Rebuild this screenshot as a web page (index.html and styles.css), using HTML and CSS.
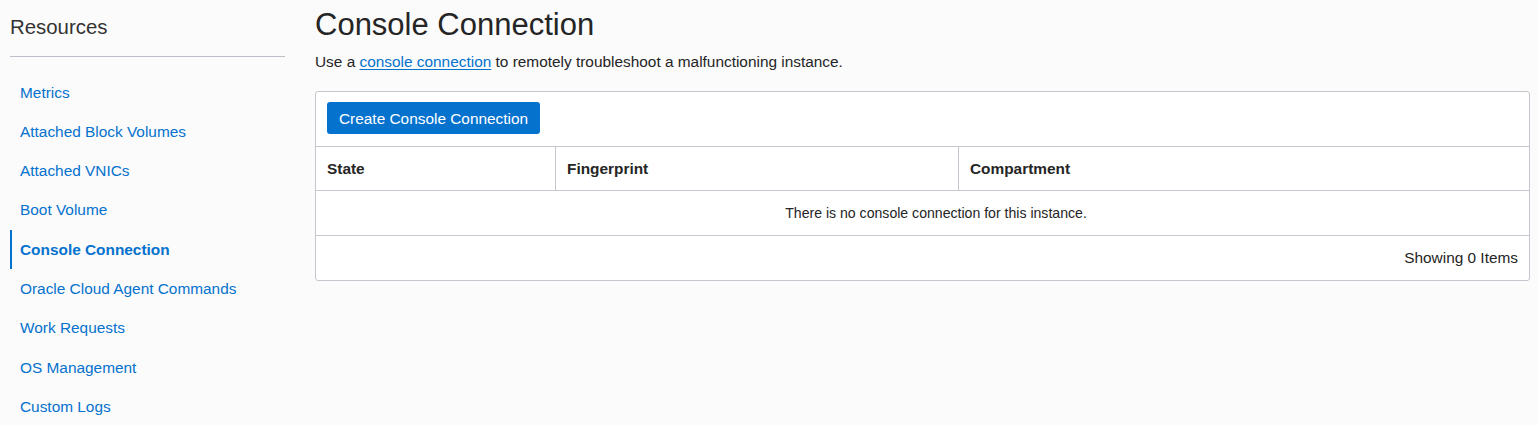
FILE: index.html
```html
<!DOCTYPE html>
<html>
<head>
<meta charset="utf-8">
<link rel="stylesheet" href="styles.css">
</head>
<body>
<div class="page">
  <aside class="sidebar">
    <h2 class="side-title">Resources</h2>
    <nav class="side-nav">
      <a class="nav-item">Metrics</a>
      <a class="nav-item">Attached Block Volumes</a>
      <a class="nav-item">Attached VNICs</a>
      <a class="nav-item">Boot Volume</a>
      <a class="nav-item active">Console Connection</a>
      <a class="nav-item">Oracle Cloud Agent Commands</a>
      <a class="nav-item">Work Requests</a>
      <a class="nav-item">OS Management</a>
      <a class="nav-item">Custom Logs</a>
    </nav>
  </aside>
  <main class="main">
    <h1 class="title">Console Connection</h1>
    <p class="desc">Use a <a class="link">console connection</a> to remotely troubleshoot a malfunctioning instance.</p>
    <div class="panel">
      <div class="toolbar">
        <button class="btn">Create Console Connection</button>
      </div>
      <div class="thead">
        <div class="th col1">State</div>
        <div class="th col2">Fingerprint</div>
        <div class="th col3">Compartment</div>
      </div>
      <div class="empty">There is no console connection for this instance.</div>
      <div class="footer">Showing 0 Items</div>
    </div>
  </main>
</div>
</body>
</html>
```

FILE: styles.css
```css
html, body {
  margin: 0;
  padding: 0;
  background: #fbfbfb;
  font-family: "Liberation Sans", Arial, sans-serif;
  color: #252525;
}
.page {
  display: flex;
  gap: 30px;
  padding: 0 8px 0 10px;
}
.sidebar {
  width: 275px;
  flex-shrink: 0;
}
.side-title {
  margin: 15px 0 0;
  font-size: 20.4px;
  line-height: 24px;
  font-weight: normal;
  color: #333;
  padding-bottom: 17px;
  border-bottom: 1px solid #bcc0c8;
}
.side-nav {
  display: flex;
  flex-direction: column;
  padding-top: 16px;
}
.nav-item {
  display: block;
  padding: 9.65px 0 9.65px 8px;
  line-height: 20px;
  font-size: 15.4px;
  color: #0572ce;
  border-left: 2px solid transparent;
}
.nav-item.active {
  border-left-color: #0572ce;
  font-weight: bold;
}
.main {
  flex: 1;
  min-width: 0;
}
.title {
  margin: 7px 0 0;
  font-size: 31px;
  line-height: 36px;
  font-weight: normal;
  color: #252525;
}
.desc {
  margin: 9px 0 0;
  font-size: 15.4px;
  line-height: 20px;
  color: #252525;
}
.link {
  color: #0572ce;
  text-decoration: underline;
  text-underline-offset: 2px;
}
.panel {
  margin-top: 19px;
  background: #fff;
  border: 1px solid #c4c8ce;
  border-radius: 3px;
}
.toolbar {
  padding: 10px 11px 12px;
  border-bottom: 1px solid #c4c8ce;
}
.btn {
  display: block;
  height: 32px;
  padding: 1px 12px 0;
  background: #0572ce;
  color: #fff;
  border: none;
  border-radius: 3px;
  font-family: "Liberation Sans", Arial, sans-serif;
  font-size: 15.4px;
}
.thead {
  display: grid;
  grid-template-columns: 239px 403px 1fr;
  height: 43px;
  border-bottom: 1px solid #c4c8ce;
}
.th {
  display: flex;
  align-items: center;
  padding-left: 11px;
  font-size: 15.4px;
  font-weight: bold;
  color: #252525;
}
.col2, .col3 {
  border-left: 1px solid #c4c8ce;
}
.empty {
  height: 44px;
  display: flex;
  align-items: center;
  justify-content: center;
  padding-left: 27px;
  font-size: 14.1px;
  border-bottom: 1px solid #c4c8ce;
}
.footer {
  height: 44px;
  display: flex;
  align-items: center;
  justify-content: flex-end;
  padding-right: 11px;
  font-size: 15.4px;
}
```
